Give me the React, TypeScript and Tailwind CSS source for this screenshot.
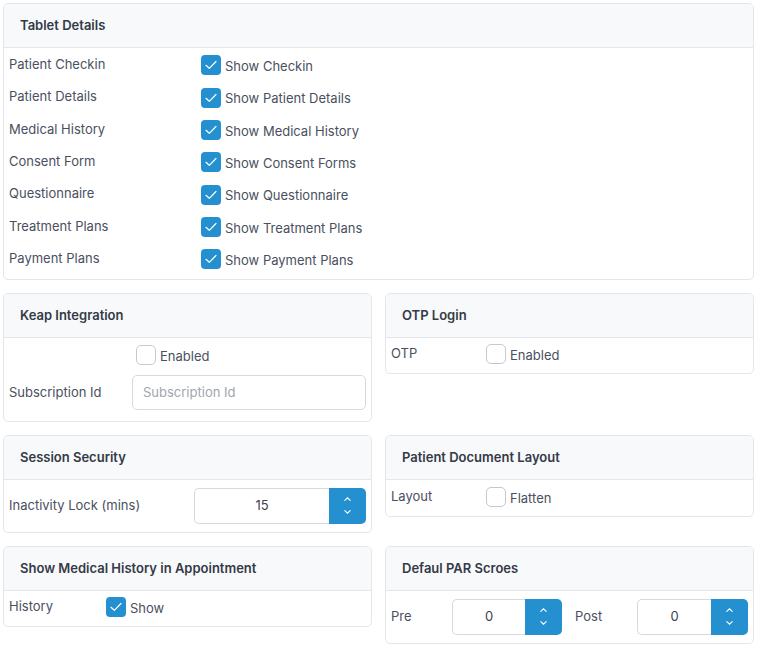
import React from "react";

const font = { fontFamily: "Inter, 'Noto Sans', sans-serif" };

function Card({ title, children }: { title: string; children: React.ReactNode }) {
  return (
    <div className="overflow-hidden rounded-[5px] border border-[#e4e7ea] bg-white">
      <div className="flex h-[44px] items-center border-b border-[#e4e7ea] bg-[#f8f9fb] px-4 text-[13px] font-semibold text-[#343a46]">
        {title}
      </div>
      <div className="px-[5px]">{children}</div>
    </div>
  );
}

function Check({ checked, label }: { checked?: boolean; label: string }) {
  return (
    <span className="flex items-center gap-[4px]">
      {checked ? (
        <span className="flex h-[20px] w-[20px] items-center justify-center rounded-[4px] bg-[#2490d0]">
          <svg width="20" height="20" viewBox="0 0 20 20" fill="none">
            <path d="M5 10.3 8.3 13.3 15 6.5" stroke="white" strokeWidth="1.2" strokeLinecap="round" strokeLinejoin="round" />
          </svg>
        </span>
      ) : (
        <span className="h-[20px] w-[20px] rounded-[5px] border border-[#c4c9d0] bg-white" />
      )}
      <span className="mt-[3px] text-[13px] text-[#4a5060]">{label}</span>
    </span>
  );
}

function Spinner({ value, width }: { value: string; width: string }) {
  return (
    <div className={`flex h-[36px] ${width}`}>
      <div className="flex flex-1 items-center justify-center rounded-l-[5px] border border-r-0 border-[#d6dae0] text-[13px] text-[#3c4250]">
        {value}
      </div>
      <div className="flex w-[37px] flex-col items-center justify-center gap-[9px] rounded-r-[5px] bg-[#2490d0]">
        <svg width="7" height="4" viewBox="0 0 7 4" fill="none">
          <path d="M0.8 3.4 3.5 0.8 6.2 3.4" stroke="white" strokeWidth="1.1" strokeLinecap="round" />
        </svg>
        <svg width="7" height="4" viewBox="0 0 7 4" fill="none">
          <path d="M0.8 0.6 3.5 3.2 6.2 0.6" stroke="white" strokeWidth="1.1" strokeLinecap="round" />
        </svg>
      </div>
    </div>
  );
}

const tablet = [
  ["Patient Checkin", "Show Checkin"],
  ["Patient Details", "Show Patient Details"],
  ["Medical History", "Show Medical History"],
  ["Consent Form", "Show Consent Forms"],
  ["Questionnaire", "Show Questionnaire"],
  ["Treatment Plans", "Show Treatment Plans"],
  ["Payment Plans", "Show Payment Plans"],
];

export default function App() {
  return (
    <div style={font} className="min-h-screen bg-white pl-[3px] pt-[3px] text-[13px] text-[#4a5060]">
      <div className="w-[751px]">
        <Card title="Tablet Details">
          <div className="flex flex-col gap-[12.33px] pb-[11px] pt-[6px]">
            {tablet.map(([l, c]) => (
              <div key={l} className="flex h-[20px] items-start">
                <span className="w-[192px] pt-[1px]">{l}</span>
                <Check checked label={c} />
              </div>
            ))}
          </div>
        </Card>

        <div className="mt-[13px] grid grid-cols-2 items-start gap-x-[13px] gap-y-[13px]">
          <Card title="Keap Integration">
            <div className="pb-[11px] pt-[6px]">
              <div className="flex h-[31px] items-start pl-[127px]">
                <Check label="Enabled" />
              </div>
              <div className="flex items-center">
                <span className="w-[123px]">Subscription Id</span>
                <input
                  placeholder="Subscription Id"
                  className="h-[35px] w-[234px] rounded-[5px] border border-[#d6dae0] px-[10px] text-[13px] outline-none placeholder:text-[#a0a6b0]"
                />
              </div>
            </div>
          </Card>

          <Card title="OTP Login">
            <div className="flex h-[35px] items-start pt-[5px]">
              <span className="w-[95px] pt-[1px]">OTP</span>
              <Check label="Enabled" />
            </div>
          </Card>

          <Card title="Session Security">
            <div className="flex h-[52px] items-center">
              <span className="w-[185px]">Inactivity Lock (mins)</span>
              <Spinner value="15" width="w-[172px]" />
            </div>
          </Card>

          <Card title="Patient Document Layout">
            <div className="flex h-[36px] items-start pt-[6px]">
              <span className="w-[95px] pt-[1px]">Layout</span>
              <Check label="Flatten" />
            </div>
          </Card>

          <Card title="Show Medical History in Appointment">
            <div className="flex h-[35px] items-start pt-[5px]">
              <span className="w-[97px] pt-[1px]">History</span>
              <Check checked label="Show" />
            </div>
          </Card>

          <Card title="Defaul PAR Scroes">
            <div className="flex h-[52px] items-center">
              <span className="w-[61px]">Pre</span>
              <Spinner value="0" width="w-[110px]" />
              <span className="w-[75px] pl-[13px]">Post</span>
              <Spinner value="0" width="w-[111px]" />
            </div>
          </Card>
        </div>
      </div>
    </div>
  );
}
